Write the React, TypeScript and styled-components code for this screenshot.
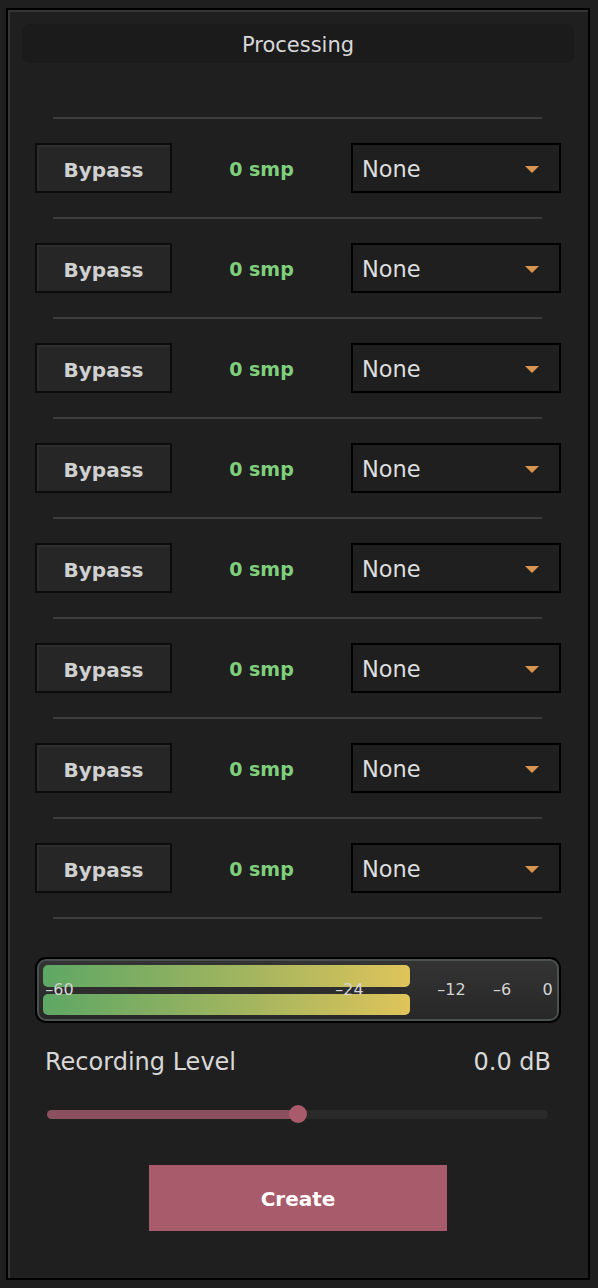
import React from 'react';
import styled, { createGlobalStyle } from 'styled-components';

const GlobalStyle = createGlobalStyle`
  html, body {
    margin: 0;
    padding: 0;
    background: #1f1f1f;
  }
  * {
    box-sizing: border-box;
  }
`;

const Frame = styled.div`
  margin: 8px 0 0 6px;
  width: 584px;
  height: 1272px;
  border: 2px solid #000;
  box-shadow: inset 2px 2px 0 #353535;
  background: #1f1f1f;
  padding: 14px 14px 0 14px;
  display: flex;
  flex-direction: column;
  font-family: "DejaVu Sans", "Liberation Sans", sans-serif;
`;

const Header = styled.div`
  height: 39px;
  border-radius: 8px;
  background: #1b1b1b;
  color: #d8d8d8;
  font-size: 21px;
  padding-top: 2px;
  display: flex;
  align-items: center;
  justify-content: center;
`;

const List = styled.div`
  margin-top: 54px;
  padding: 0 13px;
  display: flex;
  flex-direction: column;
`;

const Separator = styled.div`
  height: 2px;
  margin: 0 19px 0 18px;
  background: #3d3d3d;
`;

const Row = styled.div`
  margin: 24px 0;
  height: 50px;
  display: flex;
  align-items: center;
`;

const BypassButton = styled.button`
  flex-shrink: 0;
  width: 137px;
  height: 50px;
  border: 2px solid #0c0c0c;
  background: #262626;
  box-shadow: inset 2px 2px 0 #2d2d2d;
  color: #d0d0d0;
  font-family: inherit;
  font-weight: bold;
  font-size: 20px;
  padding: 3px 0 0 0;
  cursor: pointer;
`;

const Delay = styled.div`
  flex: 1;
  padding-top: 2px;
  text-align: center;
  color: #7fcf7d;
  font-weight: bold;
  font-size: 19px;
`;

const Select = styled.div`
  flex-shrink: 0;
  width: 210px;
  height: 50px;
  border: 2px solid #000;
  background: #1f1f1f;
  display: flex;
  align-items: center;
  justify-content: space-between;
  padding: 2px 20px 0 9px;
  color: #dedede;
  font-size: 22.5px;
`;

const Arrow = styled.span`
  width: 0;
  height: 0;
  border-left: 7px solid transparent;
  border-right: 7px solid transparent;
  border-top: 7px solid #d9954d;
`;

const Meter = styled.div`
  position: relative;
  margin: 38px 13px 0 13px;
  height: 66px;
  border: 2px solid #000;
  border-radius: 11px;
  box-shadow: inset 0 0 0 2px #4b5050;
  background: linear-gradient(#343434, #272727);
  padding: 6px 6px;
  display: flex;
  flex-direction: column;
  gap: 7px;
`;

const Bar = styled.div`
  width: 367px;
  height: 22px;
  border-radius: 5px;
  background: linear-gradient(to right, #5ea765, #a2b55f 55%, #dfc45a);
`;

const Tick = styled.span`
  position: absolute;
  top: 50%;
  transform: translate(-50%, -50%);
  color: #d4d4d4;
  font-size: 16px;
  line-height: 1;
`;

const LevelRow = styled.div`
  margin-top: 25px;
  padding: 0 23px;
  height: 28px;
  display: flex;
  align-items: center;
  justify-content: space-between;
  color: #d8d8d8;
  font-size: 24px;
`;

const Slider = styled.div`
  position: relative;
  margin: 29px 26px 0 25px;
  height: 18px;
  display: flex;
  align-items: center;
`;

const Track = styled.div`
  width: 100%;
  height: 9px;
  border-radius: 5px;
  background: #2a2a2a;
  overflow: hidden;
`;

const Fill = styled.div`
  height: 100%;
  background: #8b5060;
`;

const Thumb = styled.div`
  position: absolute;
  top: 0;
  width: 18px;
  height: 18px;
  border-radius: 50%;
  background: #a95b6c;
  transform: translateX(-50%);
`;

const CreateButton = styled.button`
  align-self: center;
  margin-top: 42px;
  width: 298px;
  height: 66px;
  border: none;
  background: #a85b6b;
  color: #fff;
  font-family: inherit;
  font-weight: bold;
  font-size: 20px;
  padding-top: 2px;
  cursor: pointer;
`;

const ticks = [
  { label: '–60', x: 22.5 },
  { label: '–24', x: 312.5 },
  { label: '–12', x: 414.5 },
  { label: '–6', x: 465 },
  { label: '0', x: 510.5 },
];

const channels = Array.from({ length: 8 }, (_, i) => i);

const App: React.FC = () => {
  const level = 0.5;

  return (
    <>
      <GlobalStyle />
      <Frame>
        <Header>Processing</Header>
        <List>
          <Separator />
          {channels.map(ch => (
            <React.Fragment key={ch}>
              <Row>
                <BypassButton>Bypass</BypassButton>
                <Delay>0 smp</Delay>
                <Select>
                  None
                  <Arrow />
                </Select>
              </Row>
              <Separator />
            </React.Fragment>
          ))}
        </List>
        <Meter>
          <Bar />
          <Bar />
          {ticks.map(t => (
            <Tick key={t.label} style={{ left: t.x }}>{t.label}</Tick>
          ))}
        </Meter>
        <LevelRow>
          <span>Recording Level</span>
          <span>0.0 dB</span>
        </LevelRow>
        <Slider>
          <Track>
            <Fill style={{ width: `${level * 100}%` }} />
          </Track>
          <Thumb style={{ left: `${level * 100}%` }} />
        </Slider>
        <CreateButton>Create</CreateButton>
      </Frame>
    </>
  );
};

export default App;
